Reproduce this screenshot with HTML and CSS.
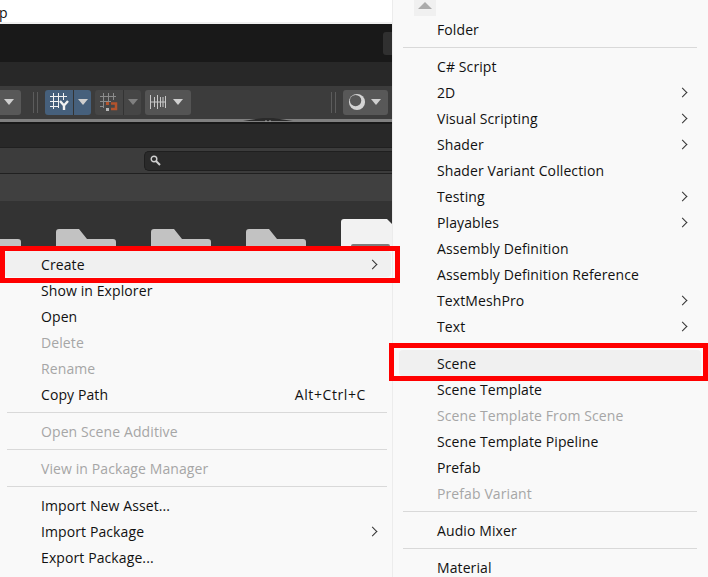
FILE: index.html
```html
<!DOCTYPE html>
<html lang="en">

<head>
    <meta charset="UTF-8">
    <meta name="viewport" content="width=device-width, initial-scale=1.0">
    <title>Create Scene</title>
    <link rel="stylesheet" href="styles.css">
</head>

<body>
    <div class="screen">
        <div class="editor">
            <div class="title-bar">p</div>
            <div class="tab-bar"><span class="tab-button"></span></div>
            <div class="band"></div>
            <div class="toolbar">
                <div class="tool tool-first"><span class="caret"></span></div>
                <span class="grip"></span>
                <div class="tool tool-snap">
                    <span class="tool-icon">
                        <svg width="20" height="18" viewBox="0 0 20 18" fill="none" stroke="#f2f2f2" stroke-width="1">
                            <path d="M1 3.500H18M1 8.500H10M1 13.500H9M4.500 0V16M9.500 0V15M14.500 0V7" />
                            <path d="M11 8L15 12.500L19 8M15 12.500V17" stroke-width="2.400" />
                        </svg>
                    </span>
                    <span class="tool-drop"><span class="caret"></span></span>
                </div>
                <div class="tool tool-magnet">
                    <span class="tool-icon">
                        <svg width="20" height="18" viewBox="0 0 20 18" fill="none" stroke="#8c8c8c" stroke-width="1">
                            <path d="M1 3.500H17M1 8.500H12M1 13.500H5M4.500 0V15M9.500 0V9M14.500 0V7" />
                            <path d="M12 10.500H17V16H12" stroke="#b4532c" stroke-width="2.500" />
                            <rect x="7" y="15" width="3" height="3" fill="#b8b8b8" stroke="none" />
                            <rect x="7" y="9" width="3" height="3" fill="#b4532c" stroke="none" />
                        </svg>
                    </span>
                    <span class="tool-drop"><span class="caret caret-dim"></span></span>
                </div>
                <div class="tool tool-ruler">
                    <svg width="18" height="16" viewBox="0 0 18 16" fill="none" stroke="#c8c8c8" stroke-width="1">
                        <path d="M0.500 1V15M15.500 2V14M4.500 3V13M7.500 1V15M10.500 3V13M13 3V13M0 8H16" />
                    </svg>
                    <span class="caret"></span>
                </div>
                <span class="grip grip-right"></span>
                <div class="tool tool-light">
                    <svg width="18" height="18" viewBox="0 0 19 19">
                        <circle cx="9.500" cy="9.500" r="8.500" fill="#d4d4d4" />
                        <circle cx="8" cy="8" r="6" fill="#585858" />
                    </svg>
                    <span class="caret"></span>
                </div>
            </div>
            <div class="splitter">
                <svg class="splitter-bump" width="50" height="4" viewBox="0 0 50 4">
                    <path d="M0 3L20 0H30L50 3Z" fill="#2a2a2a" />
                    <path d="M22 3H24M26 3H28" stroke="#a0a0a0" />
                </svg>
            </div>
            <div class="line-dark"></div>
            <div class="band band-short"></div>
            <div class="search-row">
                <div class="search">
                    <svg width="11" height="11" viewBox="0 0 11 11" fill="none" stroke="#d0d0d0">
                        <circle cx="4" cy="4" r="2.800" stroke-width="1.400" />
                        <path d="M6 6L10 10" stroke-width="2" />
                    </svg>
                </div>
            </div>
            <div class="crumbs"></div>
            <div class="assets">
                <svg class="folder folder-cut" width="21" height="30" viewBox="0 0 21 30">
                    <path d="M0 10H18Q21 10 21 13V30H0Z" fill="#c2c2c2" />
                </svg>
                <svg class="folder" width="60" height="30" viewBox="0 0 60 30">
                    <path d="M0 3Q0 0 3 0H23L31 10H57Q60 10 60 13V30H0Z" fill="#c2c2c2" />
                </svg>
                <svg class="folder" width="60" height="30" viewBox="0 0 60 30">
                    <path d="M0 3Q0 0 3 0H23L31 10H57Q60 10 60 13V30H0Z" fill="#c2c2c2" />
                </svg>
                <svg class="folder" width="60" height="30" viewBox="0 0 60 30">
                    <path d="M0 3Q0 0 3 0H23L31 10H57Q60 10 60 13V30H0Z" fill="#c2c2c2" />
                </svg>
                <svg class="doc" width="52" height="40" viewBox="0 0 52 40">
                    <path d="M0 3Q0 0 3 0H46L52 6V40H0Z" fill="#f2f2f2" />
                    <rect x="10" y="25" width="39" height="15" rx="2" fill="#7d7d7d" />
                </svg>
            </div>
        </div>

        <div class="menu menu-left">
            <div class="item item-hover item-marked">Create<span class="chevron"></span></div>
            <div class="item">Show in Explorer</div>
            <div class="item">Open</div>
            <div class="item off">Delete</div>
            <div class="item off">Rename</div>
            <div class="item">Copy Path<span class="shortcut">Alt+Ctrl+C</span></div>
            <div class="sep"></div>
            <div class="item off">Open Scene Additive</div>
            <div class="sep"></div>
            <div class="item off">View in Package Manager</div>
            <div class="sep"></div>
            <div class="item">Import New Asset...</div>
            <div class="item">Import Package<span class="chevron"></span></div>
            <div class="item">Export Package...</div>
        </div>

        <div class="menu menu-right">
            <div class="scroll-up"><span class="scroll-arrow"></span></div>
            <div class="item">Folder</div>
            <div class="sep"></div>
            <div class="item">C# Script</div>
            <div class="item">2D<span class="chevron"></span></div>
            <div class="item">Visual Scripting<span class="chevron"></span></div>
            <div class="item">Shader<span class="chevron"></span></div>
            <div class="item">Shader Variant Collection</div>
            <div class="item">Testing<span class="chevron"></span></div>
            <div class="item">Playables<span class="chevron"></span></div>
            <div class="item">Assembly Definition</div>
            <div class="item">Assembly Definition Reference</div>
            <div class="item">TextMeshPro<span class="chevron"></span></div>
            <div class="item">Text<span class="chevron"></span></div>
            <div class="sep"></div>
            <div class="item item-hover item-marked">Scene</div>
            <div class="item">Scene Template</div>
            <div class="item off">Scene Template From Scene</div>
            <div class="item">Scene Template Pipeline</div>
            <div class="item">Prefab</div>
            <div class="item off">Prefab Variant</div>
            <div class="sep"></div>
            <div class="item">Audio Mixer</div>
            <div class="sep"></div>
            <div class="item">Material</div>
        </div>
    </div>
</body>

</html>
```

FILE: styles.css
```css
body {
    margin: 0;
    font-family: "Open Sans", Arial, sans-serif;
    background-color: #333333;
}

.screen {
    position: relative;
    width: 708px;
    height: 577px;
    overflow: hidden;
}

.editor {
    width: 392px;
}

.title-bar {
    height: 24px;
    margin-left: -1px;
    padding-top: 5px;
    background-color: #ffffff;
    border-bottom: 2px solid #f0f0f0;
    box-sizing: border-box;
    font-size: 14px;
    line-height: 16px;
    color: #111111;
}

.tab-bar {
    height: 38px;
    background-color: #191919;
    display: flex;
    justify-content: flex-end;
    align-items: center;
}

.tab-button {
    width: 9px;
    height: 23px;
    background-color: #303030;
    border-radius: 3px 0 0 3px;
}

.band {
    height: 24px;
    background-color: #282828;
}

.band-short {
    height: 23px;
}

.toolbar {
    height: 33px;
    background-color: #3c3c3c;
    display: flex;
    align-items: center;
    padding-bottom: 1px;
    box-sizing: border-box;
}

.tool {
    height: 25px;
    display: flex;
    align-items: center;
    border-radius: 3px;
    margin-right: 4px;
    box-sizing: border-box;
}

.tool-first {
    width: 21px;
    margin-right: 0;
    background-color: #585858;
    border-radius: 0 3px 3px 0;
    justify-content: flex-end;
    padding-right: 7px;
}

.tool-snap {
    width: 46px;
    background-color: #46607c;
}

.tool-magnet {
    width: 46px;
    background-color: #464646;
}

.tool-ruler {
    width: 46px;
    background-color: #545454;
    margin-right: 0;
    padding-left: 5px;
    gap: 5px;
}

.tool-light {
    width: 45px;
    background-color: #585858;
    padding-left: 5px;
    gap: 5px;
}

.tool-icon {
    width: 28px;
    height: 100%;
    display: flex;
    align-items: center;
    justify-content: center;
    flex: none;
}

.tool-drop {
    flex: 1;
    height: 100%;
    display: flex;
    align-items: center;
    justify-content: center;
    border-left: 1px solid #333333;
}

.caret {
    width: 0;
    height: 0;
    border-left: 5px solid transparent;
    border-right: 5px solid transparent;
    border-top: 6px solid #cfcfcf;
}

.caret-dim {
    border-top-color: #808080;
}

.grip {
    width: 5px;
    height: 21px;
    margin: 0 7px 0 12px;
    border-left: 1px solid #5c5c5c;
    border-right: 1px solid #5c5c5c;
    box-sizing: border-box;
}

.grip-right {
    margin-left: auto;
}

.splitter {
    height: 3px;
    background-color: #808080;
    position: relative;
}

.splitter-bump {
    position: absolute;
    left: 243px;
    top: -1px;
}

.line-dark {
    height: 2px;
    background-color: #191919;
}

.search-row {
    height: 25px;
    background-color: #3c3c3c;
    border-top: 1px solid #202020;
    border-bottom: 1px solid #202020;
    display: flex;
    align-items: center;
    justify-content: flex-end;
}

.search {
    width: 248px;
    height: 20px;
    background-color: #2a2a2a;
    border: 1px solid #1f1f1f;
    border-right: none;
    border-radius: 5px 0 0 5px;
    box-sizing: border-box;
    display: flex;
    align-items: center;
    padding-left: 5px;
}

.crumbs {
    height: 27px;
    background-color: #404040;
}

.assets {
    height: 58px;
    background-color: #333333;
    display: flex;
    align-items: flex-end;
}

.folder {
    margin-right: 35px;
    flex: none;
}

.doc {
    flex: none;
}

/* context menus */
.menu {
    position: absolute;
    background-color: #f9f9f9;
    color: #111111;
    font-size: 14px;
    letter-spacing: 0.1px;
    box-sizing: border-box;
}

.menu-left {
    left: 0;
    top: 246px;
    width: 392px;
    height: 331px;
    padding: 5px 1px 0 5px;
}

.menu-right {
    left: 392px;
    top: 0;
    width: 316px;
    height: 577px;
    padding: 0 7px 0 6px;
    border-left: 1px solid #ececec;
}

.item {
    position: relative;
    height: 26px;
    padding-top: 1px;
    line-height: 26px;
    padding-left: 36px;
    display: flex;
    justify-content: space-between;
    border-radius: 4px;
    white-space: nowrap;
    box-sizing: border-box;
}

.menu-right .item {
    padding-left: 38px;
}

.item-hover {
    background-color: #f0f0f0;
}

.item-marked::after {
    content: "";
    position: absolute;
    z-index: 5;
    border: 5px solid #ff0000;
    pointer-events: none;
}

.menu-left .item-marked::after {
    left: -5px;
    right: -9px;
    top: -5px;
    bottom: -6px;
}

.menu-right .item-marked::after {
    left: -10px;
    right: -7px;
    top: -7px;
    bottom: -5px;
}

.off {
    color: #a6a6a6;
}

.sep {
    height: 1px;
    margin: 5px 4px;
    background-color: #d9d9d9;
}

.menu-left .sep {
    margin: 5px 4px 5px 2px;
}

.shortcut {
    margin-right: 25px;
    letter-spacing: 0.6px;
}

.chevron {
    width: 7px;
    height: 7px;
    margin: 9px 15px 0 0;
    border-top: 1.500px solid #333333;
    border-right: 1.500px solid #333333;
    transform: rotate(45deg);
    box-sizing: border-box;
}

.scroll-up {
    width: 22px;
    height: 16px;
    margin-left: 15px;
    background-color: #f0f0f0;
    display: flex;
    justify-content: center;
    padding-top: 2px;
    box-sizing: border-box;
}

.scroll-arrow {
    width: 0;
    height: 0;
    border-left: 7px solid transparent;
    border-right: 7px solid transparent;
    border-bottom: 7px solid #aaaaaa;
}
```
